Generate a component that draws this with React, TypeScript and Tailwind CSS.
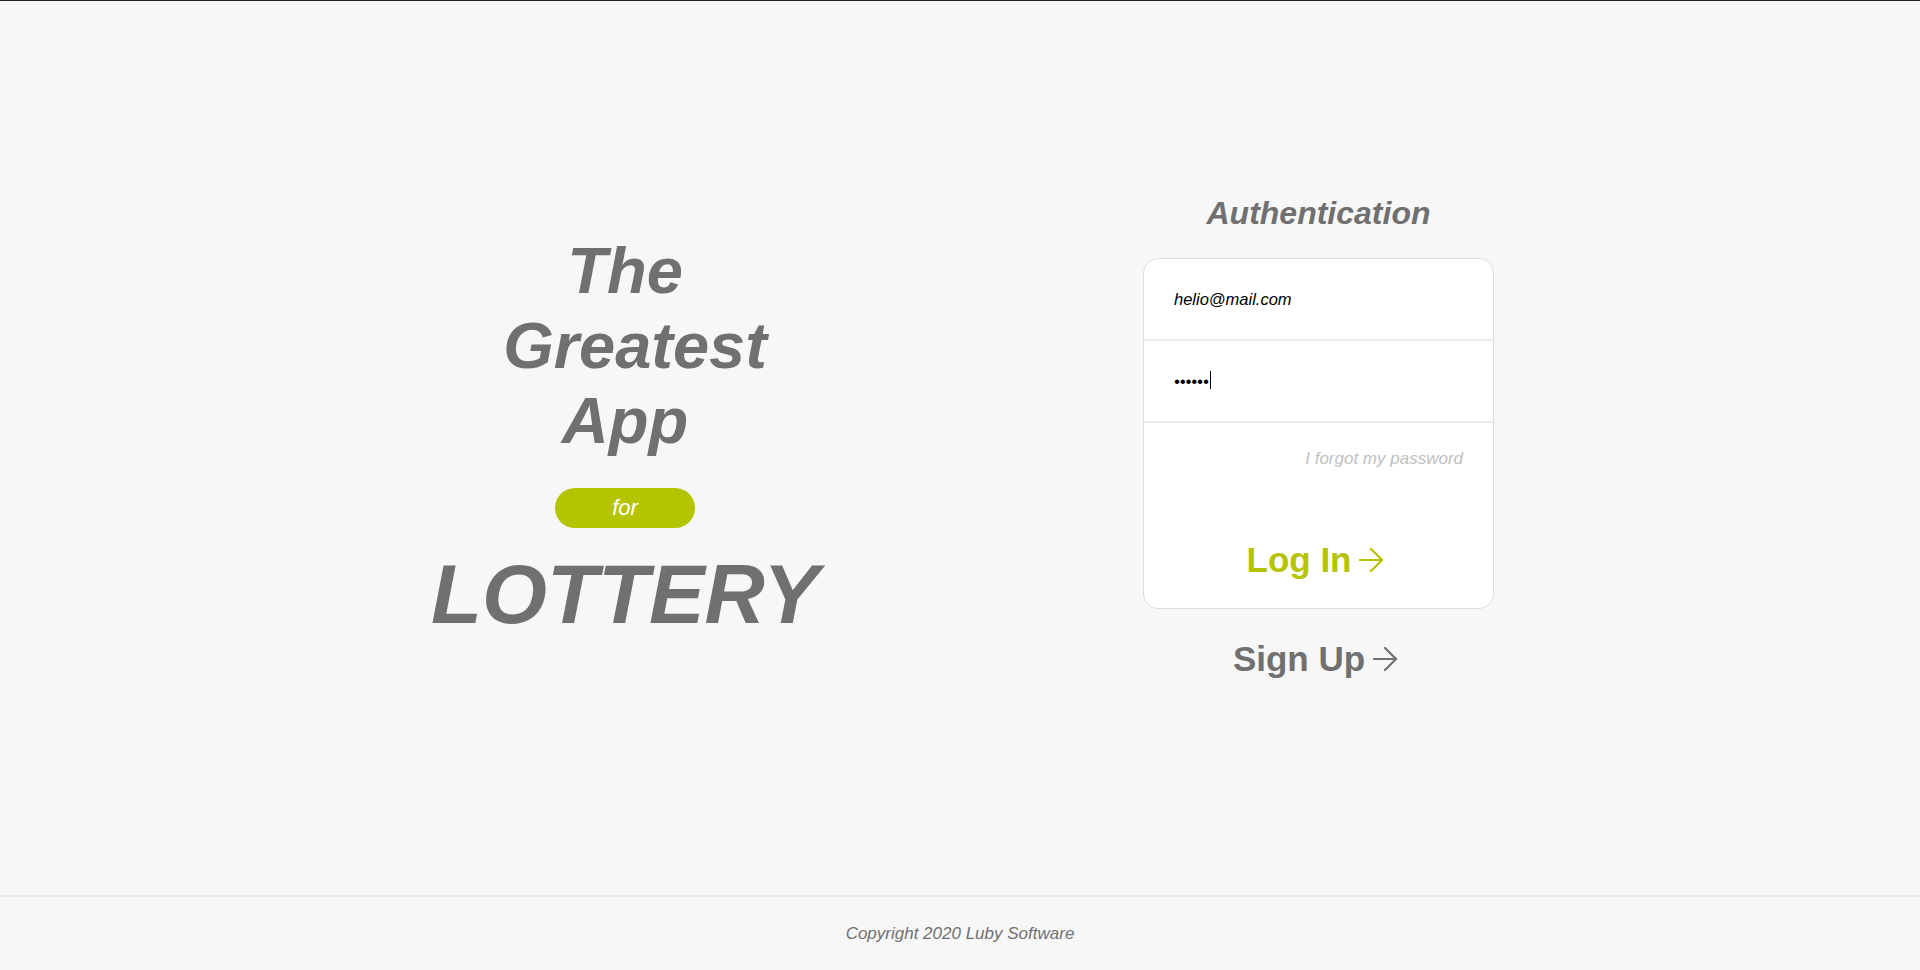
import { ArrowRight } from "lucide-react";

function TitleBlock() {
  return (
    <section className="flex w-[404px] flex-col items-center pr-[6px] text-[#707070]">
      <h1 className="flex flex-col items-center text-[65px] font-bold italic leading-[75px]">
        <span>The</span>
        <span className="pl-[20px]">Greatest</span>
        <span>App</span>
      </h1>
      <span className="mt-[30px] flex h-[40px] w-[140px] items-center justify-center rounded-full bg-[#b5c401] text-[22px] italic text-white">
        for
      </span>
      <p className="mt-[18px] text-[83.5px] font-bold italic leading-[96px]">LOTTERY</p>
    </section>
  );
}

function AuthCard() {
  return (
    <section className="flex w-[351px] flex-col items-center pb-[6px]">
      <h2 className="text-[32px] font-bold italic text-[#707070]">Authentication</h2>

      <form
        className="mt-[21px] flex w-full flex-col overflow-hidden rounded-[15px] border border-[#dddddd] bg-white"
        onSubmit={(e) => e.preventDefault()}
      >
        <input
          type="email"
          defaultValue="helio@mail.com"
          className="h-[82px] border-b-2 border-[#ebebeb] px-[30px] text-[16.5px] italic text-black outline-none"
        />
        <div className="relative flex">
          <input
            type="password"
            defaultValue="123456"
            className="h-[82px] w-full border-b-2 border-[#ebebeb] px-[30px] text-[16.5px] italic text-black caret-transparent outline-none"
          />
          {/* caret left in the field, as in the capture */}
          <span className="pointer-events-none absolute left-[66px] top-[30px] h-[18px] w-px bg-black" />
        </div>

        <div className="flex flex-col px-[30px] pb-[28px] pt-[23px]">
          <a href="#" className="self-end text-[17px] italic text-[#c1c1c1]">
            I forgot my password
          </a>
          <button
            type="submit"
            className="mt-[68px] flex items-center justify-center text-[35px] font-bold leading-[40px] text-[#b5c401]"
          >
            Log In
            <ArrowRight size={38} strokeWidth={1.4} className="ml-[1px]" />
          </button>
        </div>
      </form>

      <button className="mt-[30px] flex items-center justify-center text-[35px] font-bold leading-[40px] text-[#707070]">
        Sign Up
        <ArrowRight size={38} strokeWidth={1.4} className="ml-[1px]" />
      </button>
    </section>
  );
}

export default function App() {
  return (
    <div className="flex min-h-screen flex-col border-t border-[#222222] bg-[#f7f7f7] font-['Liberation_Sans',Arial,sans-serif]">
      <main className="flex flex-1 items-center justify-center gap-[313px] pb-[22px]">
        <TitleBlock />
        <AuthCard />
      </main>

      <footer className="flex h-[75px] items-center justify-center border-t-2 border-[#ebebeb]">
        <p className="text-[17px] italic text-[#707070]">Copyright 2020 Luby Software</p>
      </footer>
    </div>
  );
}
